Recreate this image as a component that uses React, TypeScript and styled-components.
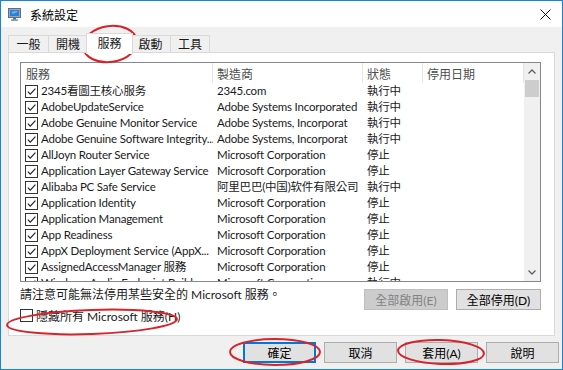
import { FC } from 'react'
import styled, { createGlobalStyle } from 'styled-components'

const GlobalStyle = createGlobalStyle`
  html, body {
    margin: 0;
    padding: 0;
    background: #ffffff;
  }
  body {
    font-family: "Segoe UI", Lato, "Noto Sans CJK TC", sans-serif;
    font-size: 12px;
    color: #1a1a1a;
  }
`

const Window = styled.div`
  position: relative;
  width: 563px;
  height: 370px;
  box-sizing: border-box;
  border: 1px solid #1883d7;
  background: #f0f0f0;
  display: flex;
  flex-direction: column;
  overflow: hidden;
`

const TitleBar = styled.div`
  height: 26px;
  background: #ffffff;
  display: flex;
  align-items: center;
  padding: 0 8px 0 7px;
  flex-shrink: 0;
`

const Title = styled.span`
  margin-left: 8px;
  font-size: 12px;
  color: #000;
  flex: 1;
`

const CloseBtn = styled.div`
  width: 14px;
  height: 14px;
  display: flex;
  align-items: center;
  justify-content: center;
  margin-right: 2px;
`

const Body = styled.div`
  padding: 6px 7px 0 7px;
  display: flex;
  flex-direction: column;
`

const TabStrip = styled.div`
  display: flex;
  align-items: flex-end;
  height: 20px;
  position: relative;
  z-index: 1;
`

const Tab = styled.div<{ $active?: boolean; $w: number }>`
  box-sizing: border-box;
  width: ${p => p.$w}px;
  height: ${p => (p.$active ? 21 : 18)}px;
  margin: ${p => (p.$active ? '0 -2px -1px' : '0')};
  border: 1px solid #d9d9d9;
  border-bottom: ${p => (p.$active ? 'none' : '1px solid #d9d9d9')};
  margin-left: ${p => (p.$active ? '-2px' : '-1px')};
  background: ${p => (p.$active ? '#ffffff' : '#f0f0f0')};
  display: flex;
  align-items: center;
  justify-content: center;
  padding-bottom: ${p => (p.$active ? 3 : 1)}px;
  position: relative;
  z-index: ${p => (p.$active ? 2 : 1)};
  &:first-child {
    margin-left: 0;
  }
`

const Panel = styled.div`
  box-sizing: border-box;
  height: 284px;
  margin-top: -1px;
  background: #ffffff;
  border: 1px solid #d9d9d9;
  padding: 9px 13px 0 11px;
  display: flex;
  flex-direction: column;
`

const ListBox = styled.div`
  box-sizing: border-box;
  height: 220px;
  border: 1px solid #828790;
  display: flex;
  overflow: hidden;
`

const Table = styled.div`
  flex: 1;
  min-width: 0;
  display: flex;
  flex-direction: column;
  overflow: hidden;
`

const cols = '192px 150px 60px 1fr'

const HeaderRow = styled.div`
  display: grid;
  grid-template-columns: ${cols};
  height: 20px;
  flex-shrink: 0;
`

const HeaderCell = styled.div<{ $pad: number }>`
  display: flex;
  align-items: center;
  padding-left: ${p => p.$pad}px;
  border-right: 1px solid #e5e5e5;
  color: #4d4d4d;
  white-space: nowrap;
`

const Row = styled.div`
  display: grid;
  grid-template-columns: ${cols};
  height: 16px;
  flex-shrink: 0;
  line-height: 16px;
  font-size: 11.5px;
  letter-spacing: -0.2px;
`

const Cell = styled.div<{ $pad: number }>`
  display: flex;
  align-items: center;
  padding-left: ${p => p.$pad}px;
  white-space: nowrap;
  overflow: hidden;
  min-width: 0;
`

const CellText = styled.span`
  margin-left: 3px;
`

const Box = styled.span`
  box-sizing: border-box;
  width: 13px;
  height: 13px;
  border: 1px solid #333333;
  background: #ffffff;
  display: inline-flex;
  flex-shrink: 0;
`

const Scrollbar = styled.div`
  width: 16px;
  background: #f0f0f0;
  display: flex;
  flex-direction: column;
  flex-shrink: 0;
`

const Arrow = styled.div`
  height: 17px;
  display: flex;
  align-items: center;
  justify-content: center;
`

const Thumb = styled.div`
  height: 17px;
  margin: 0 1px;
  background: #cdcdcd;
`

const Track = styled.div`
  flex: 1;
`

const NoteRow = styled.div`
  display: flex;
  align-items: flex-start;
  margin-top: 7px;
  gap: 8px;
`

const Note = styled.span`
  flex: 1;
  margin-top: -4px;
`

const Button = styled.div<{ $disabled?: boolean; $default?: boolean; $w?: number }>`
  box-sizing: border-box;
  width: ${p => p.$w ?? 73}px;
  height: 21px;
  display: flex;
  align-items: center;
  justify-content: center;
  background: ${p => (p.$disabled ? '#cccccc' : '#e1e1e1')};
  border: ${p => (p.$default ? '2px solid #0078d7' : p.$disabled ? '1px solid #bfbfbf' : '1px solid #adadad')};
  color: ${p => (p.$disabled ? '#838383' : '#000000')};
  white-space: nowrap;
`

const HideRow = styled.label`
  display: flex;
  align-items: center;
  margin-top: -2px;
  height: 14px;
  gap: 3px;
`

const Footer = styled.div`
  display: flex;
  justify-content: flex-end;
  gap: 8px;
  padding: 6px 3px 0 0;
`

const Marks = styled.svg`
  position: absolute;
  left: -1px;
  top: -1px;
  pointer-events: none;
`

const Check: FC<{ on?: boolean }> = ({ on }) => (
  <Box>
    {on && (
      <svg width="11" height="11" viewBox="0 0 11 11">
        <path d="M1.8 5.6 L4.3 8.1 L9.4 2.6" fill="none" stroke="#222" strokeWidth="1.2" />
      </svg>
    )}
  </Box>
)

const services: [string, string, string][] = [
  ['2345看圖王核心服务', '2345.com', '執行中'],
  ['AdobeUpdateService', 'Adobe Systems Incorporated', '執行中'],
  ['Adobe Genuine Monitor Service', 'Adobe Systems, Incorporat', '執行中'],
  ['Adobe Genuine Software Integrity...', 'Adobe Systems, Incorporat', '執行中'],
  ['AllJoyn Router Service', 'Microsoft Corporation', '停止'],
  ['Application Layer Gateway Service', 'Microsoft Corporation', '停止'],
  ['Alibaba PC Safe Service', '阿里巴巴(中国)软件有限公司', '執行中'],
  ['Application Identity', 'Microsoft Corporation', '停止'],
  ['Application Management', 'Microsoft Corporation', '停止'],
  ['App Readiness', 'Microsoft Corporation', '停止'],
  ['AppX Deployment Service (AppX...', 'Microsoft Corporation', '停止'],
  ['AssignedAccessManager 服務', 'Microsoft Corporation', '停止'],
  ['Windows Audio Endpoint Builder', 'Microsoft Corporation', '執行中'],
]

const tabs = [
  { label: '一般', w: 41 },
  { label: '開機', w: 40 },
  { label: '服務', w: 47, active: true },
  { label: '啟動', w: 41 },
  { label: '工具', w: 40 },
]

const App: FC = () => (
  <>
    <GlobalStyle />
    <Window>
      <TitleBar>
        <svg width="14" height="13" viewBox="0 0 14 13">
          <rect x="0.5" y="0.5" width="12" height="9" fill="#8da7c4" stroke="#5d6f85" />
          <rect x="2" y="2" width="9" height="6" fill="#2f7fd0" />
          <path d="M3 4 L8 2.5 L10 4 L5 6 Z" fill="#7fc0f0" opacity="0.7" />
          <rect x="5" y="10" width="3" height="1.5" fill="#5d6f85" />
          <rect x="3" y="11.5" width="7" height="1.2" fill="#5d6f85" />
        </svg>
        <Title>系統設定</Title>
        <CloseBtn>
          <svg width="11" height="11" viewBox="0 0 11 11">
            <path d="M0.5 0.5 L10.5 10.5 M10.5 0.5 L0.5 10.5" stroke="#111" strokeWidth="1" />
          </svg>
        </CloseBtn>
      </TitleBar>
      <Body>
        <TabStrip>
          {tabs.map(t => (
            <Tab key={t.label} $active={t.active} $w={t.w}>{t.label}</Tab>
          ))}
        </TabStrip>
        <Panel>
          <ListBox>
            <Table>
              <HeaderRow>
                <HeaderCell $pad={5}>服務</HeaderCell>
                <HeaderCell $pad={4}>製造商</HeaderCell>
                <HeaderCell $pad={4}>狀態</HeaderCell>
                <HeaderCell $pad={4}>停用日期</HeaderCell>
              </HeaderRow>
              {services.map(([name, maker, state]) => (
                <Row key={name}>
                  <Cell $pad={4}>
                    <Check on />
                    <CellText>{name}</CellText>
                  </Cell>
                  <Cell $pad={4}>{maker}</Cell>
                  <Cell $pad={4}>{state}</Cell>
                  <Cell $pad={4} />
                </Row>
              ))}
            </Table>
            <Scrollbar>
              <Arrow>
                <svg width="8" height="5" viewBox="0 0 8 5">
                  <path d="M0.5 4.5 L4 1 L7.5 4.5" fill="none" stroke="#606060" strokeWidth="1.3" />
                </svg>
              </Arrow>
              <Thumb />
              <Track />
              <Arrow>
                <svg width="8" height="5" viewBox="0 0 8 5">
                  <path d="M0.5 0.5 L4 4 L7.5 0.5" fill="none" stroke="#606060" strokeWidth="1.3" />
                </svg>
              </Arrow>
            </Scrollbar>
          </ListBox>
          <NoteRow>
            <Note>請注意可能無法停用某些安全的 Microsoft 服務。</Note>
            <Button $disabled $w={84}>全部啟用(E)</Button>
            <Button $w={85}>全部停用(D)</Button>
          </NoteRow>
          <HideRow>
            <Check />
            <span>隱藏所有 Microsoft 服務(H)</span>
          </HideRow>
        </Panel>
      </Body>
      <Footer>
        <Button $default>確定</Button>
        <Button>取消</Button>
        <Button>套用(A)</Button>
        <Button>說明</Button>
      </Footer>
      <Marks width="563" height="370" viewBox="0 0 563 370">
        <g fill="none" stroke="#d8232a" strokeWidth="2">
          <ellipse cx="110" cy="44" rx="27" ry="18" transform="rotate(-8 110 44)" />
          <ellipse cx="92" cy="322" rx="85" ry="12" transform="rotate(-2 92 322)" />
          <ellipse cx="275" cy="352" rx="45" ry="13" />
          <ellipse cx="441" cy="352" rx="43" ry="12" transform="rotate(2 441 352)" />
        </g>
      </Marks>
    </Window>
  </>
)

export default App
